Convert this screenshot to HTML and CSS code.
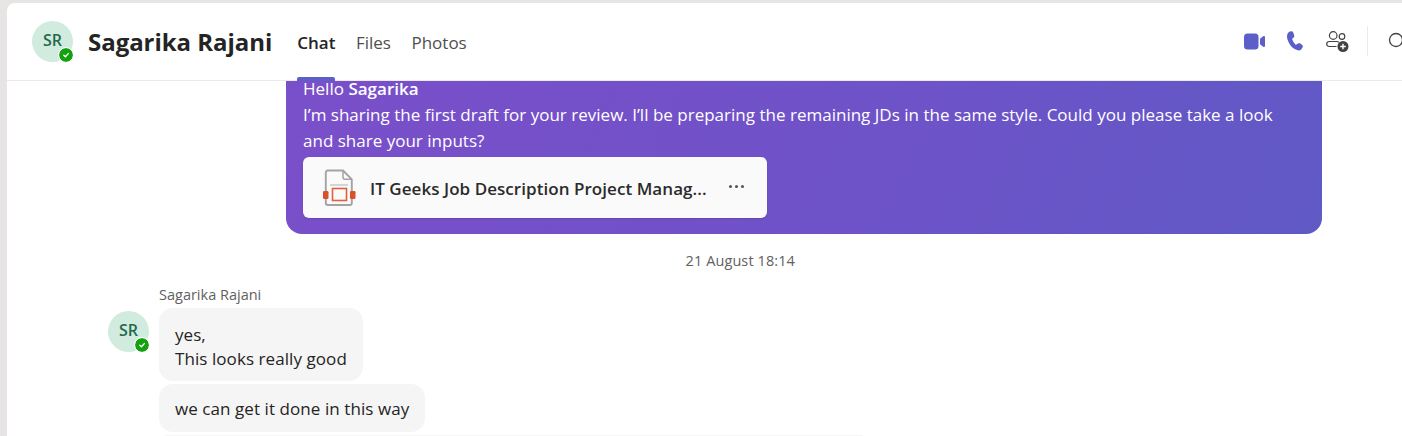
FILE: index.html
```html
<!DOCTYPE html>
<html lang="en">
<head>
<meta charset="utf-8">
<title>Sagarika Rajani - Chat</title>
<link rel="stylesheet" href="styles.css">
</head>
<body>
<main class="panel">
  <header class="topbar">
    <div class="avatar avatar-top">SR
      <span class="presence"><svg viewBox="0 0 14 14" width="14" height="14"><path d="M4.800 7.200l1.600 1.600 2.900-3.200" fill="none" stroke="#fff" stroke-width="1.400" stroke-linecap="round" stroke-linejoin="round"/></svg></span>
    </div>
    <h1 class="name">Sagarika Rajani</h1>
    <nav class="tabs">
      <a class="tab tab-active">Chat</a>
      <a class="tab">Files</a>
      <a class="tab">Photos</a>
    </nav>
    <div class="actions">
      <svg class="icon icon-video" viewBox="0 0 21 17" width="21" height="17"><rect x="0" y="0.500" width="14.500" height="16" rx="3.500" fill="#5b5fc7"/><path d="M16 5.700l3.200-2.400c.7-.5 1.800 0 1.800.8v8.800c0 .8-1.100 1.300-1.800.8L16 11.300z" fill="#5b5fc7"/></svg>
      <svg class="icon icon-phone" viewBox="0 0 16 21" width="16" height="21"><path d="M2 .9L3.700.3c1-.3 2.100.2 2.500 1.200l1 2.700c.3.800.1 1.700-.5 2.300L5.500 7.600c-.3.300-.3.700-.2 1.100.8 1.900 1.800 3.400 3.100 4.700.3.300.7.300 1.100.1l1.500-1c.7-.5 1.600-.5 2.300 0l1.700 1.300c.9.700 1.100 1.900.5 2.800l-.9 1.500c-.7 1.100-2.100 1.700-3.400 1.200C6.100 18.300 2.500 14 .5 8.400-.6 5 .3 1.700 2 .9z" fill="#5b5fc7"/></svg>
      <svg class="icon icon-add" viewBox="0 0 23 21" width="23" height="21" fill="none" stroke="#424242" stroke-width="1.200"><circle cx="7.200" cy="4.500" r="3.800"/><circle cx="16" cy="5.500" r="2.800"/><path d="M10.500 15.500H3.300C1.800 15.500.7 14.500.7 13.200c0-1.500 1.300-2.700 2.800-2.700h7.200c1 0 1.800.3 2.300.8"/><circle cx="17" cy="15.500" r="5.500" fill="#424242" stroke="none"/><path d="M17 12.700v5.600M14.200 15.500h5.600" stroke="#fff" stroke-width="1.400"/></svg>
      <span class="divider"></span>
      <svg class="icon" viewBox="0 0 14 20" width="14" height="20" fill="none" stroke="#424242" stroke-width="1.300"><circle cx="8" cy="9" r="6.500"/></svg>
    </div>
  </header>
  <section class="thread">
    <article class="sent">
      <p class="sent-text">Hello <strong>Sagarika</strong><br>I’m sharing the first draft for your review. I’ll be preparing the remaining JDs in the same style. Could you please take a look and share your inputs?</p>
      <div class="file">
        <svg class="file-icon" viewBox="0 0 34 38" width="34" height="38">
          <path d="M3.800 9V3.500c0-1.200.8-2 2-2H21l8.800 8.800V34c0 1.200-.8 2-2 2h-22c-1.200 0-2-.8-2-2v-4" fill="#fafafa" stroke="#a3a3a3" stroke-width="1.900"/>
          <path d="M3.800 9v13" stroke="#a3a3a3" stroke-width="1.900"/>
          <path d="M21 1.500V8c0 1.200.8 2.300 2 2.300h6.800" fill="none" stroke="#a3a3a3" stroke-width="1.500"/>
          <path d="M8 16h18" stroke="#c8c8c8" stroke-width="1.500"/>
          <rect x="1" y="22" width="5.500" height="8" rx="1.200" fill="#d9512c"/>
          <rect x="28" y="22" width="5.500" height="8" rx="1.200" fill="#d9512c"/>
          <rect x="10.500" y="19.500" width="14" height="12" fill="#fafafa" stroke="#e0623c" stroke-width="1.600"/>
        </svg>
        <span class="file-name">IT Geeks Job Description Project Manag...</span>
        <span class="file-more">
          <i class="dot"></i><i class="dot"></i><i class="dot"></i>
        </span>
      </div>
    </article>
    <time class="stamp">21 August 18:14</time>
    <div class="sender">Sagarika Rajani</div>
    <article class="received">
      <div class="avatar avatar-msg">SR
        <span class="presence"><svg viewBox="0 0 14 14" width="14" height="14"><path d="M4.800 7.200l1.600 1.600 2.900-3.200" fill="none" stroke="#fff" stroke-width="1.400" stroke-linecap="round" stroke-linejoin="round"/></svg></span>
      </div>
      <div class="bubbles">
        <div class="bubble">yes,<br>This looks really good</div>
        <div class="bubble bubble-single">we can get it done in this way</div>
        <div class="bubble bubble-cut"></div>
      </div>
    </article>
  </section>
</main>
</body>
</html>
```
FILE: styles.css
```css
* { box-sizing: border-box; }
html, body { margin: 0; height: 100%; }
body {
  width: 1402px;
  height: 436px;
  overflow: hidden;
  background: #e6e5e4;
  padding: 3px 0 0 7px;
  font-family: "Open Sans", "Noto Sans", "Liberation Sans", sans-serif;
  color: #242424;
}
.panel {
  height: 433px;
  background: #fff;
  border-top-left-radius: 8px;
  overflow: hidden;
  display: flex;
  flex-direction: column;
}
.topbar {
  flex: none;
  height: 78px;
  border-bottom: 1px solid #ebebeb;
  display: flex;
  align-items: center;
  padding-left: 25px;
}
.avatar {
  position: relative;
  flex: none;
  width: 41px;
  height: 41px;
  border-radius: 50%;
  background: #d2ebdf;
  color: #1f6a4d;
  font-size: 16px;
  font-weight: 600;
  display: flex;
  align-items: center;
  justify-content: center;
}
.avatar-top { margin-top: -1px; margin-right: 15px; padding-bottom: 3px; }
.presence {
  position: absolute;
  right: 0;
  bottom: 0;
  width: 14px;
  height: 14px;
  border-radius: 50%;
  background: #13a10e;
  outline: 1px solid #fff;
  display: flex;
}
.name {
  margin: 0 25px 0 0;
  font-size: 24px;
  font-weight: 700;
  letter-spacing: -0.040px;
  white-space: nowrap;
}
.tabs { display: flex; gap: 20.500px; align-self: stretch; }
.tab {
  position: relative;
  display: flex;
  align-items: center;
  font-size: 17px;
  color: #4f4f4f;
  padding-top: 1px;
}
.tab-active { color: #242424; font-weight: 600; }
.tab-active::after {
  content: "";
  position: absolute;
  left: 0;
  right: 0;
  bottom: -1px;
  height: 4px;
  border-radius: 2px 2px 0 0;
  background: #5b5fc7;
}
.actions {
  margin-left: auto;
  display: flex;
  align-items: center;
  padding-bottom: 1px;
}
.icon { flex: none; display: block; }
.icon-video { margin-right: 22px; }
.icon-phone { margin-right: 23px; }
.divider { width: 1px; height: 30px; background: #ebebeb; margin: 0 20px 0 18px; }
.thread {
  flex: 1;
  min-height: 0;
  display: flex;
  flex-direction: column;
  padding-left: 101px;
}
.sent {
  flex: none;
  margin-left: 178px;
  width: 1036px;
  height: 153px;
  padding: 0 17px;
  border-radius: 0 0 16px 16px;
  background: linear-gradient(115deg, #7a4fca 0%, #7052c8 50%, #6059c6 100%);
  color: #fff;
}
.sent-text {
  margin: -5px 0 0;
  max-width: 985px;
  font-size: 17px;
  line-height: 26px;
  letter-spacing: 0.010px;
  height: 81px;
}
.sent-text strong { font-weight: 600; }
.file {
  width: 464px;
  height: 61px;
  background: #fafafa;
  border-radius: 6px;
  box-shadow: 0 1px 2px rgba(0, 0, 0, 0.14);
  color: #242424;
  display: flex;
  align-items: center;
  padding-left: 19px;
}
.file-icon { flex: none; margin-right: 14px; }
.file-name {
  font-size: 17px;
  font-weight: 600;
  letter-spacing: 0.050px;
  white-space: nowrap;
  color: #2b2b2b;
  padding-top: 2px;
}
.file-more { display: flex; gap: 3px; margin-left: 22px; margin-bottom: 2px; }
.dot { width: 3px; height: 3px; border-radius: 50%; background: #555; }
.stamp {
  flex: none;
  margin-top: 18px;
  margin-left: 178px;
  width: 1036px;
  padding-right: 527px;
  font-size: 14.500px;
  letter-spacing: 0.100px;
  line-height: 18px;
  text-align: right;
  color: #616161;
}
.sender {
  flex: none;
  margin-top: 16px;
  margin-left: 51px;
  font-size: 14.500px;
  line-height: 18px;
  color: #616161;
}
.received {
  flex: none;
  display: flex;
  gap: 10px;
  margin-top: 4px;
}
.avatar-msg { margin-top: 3px; padding-bottom: 3px; }
.bubbles {
  display: flex;
  flex-direction: column;
  align-items: flex-start;
  gap: 3px;
}
.bubble {
  background: #f5f5f5;
  border-radius: 14px;
  padding: 14.500px 16px 10.500px;
  font-size: 17px;
  line-height: 24px;
  letter-spacing: 0.070px;
  color: #242424;
}
.bubble-single { padding: 13px 16px 11px; }
.bubble-cut { width: 711px; height: 20px; padding: 0; }
```
